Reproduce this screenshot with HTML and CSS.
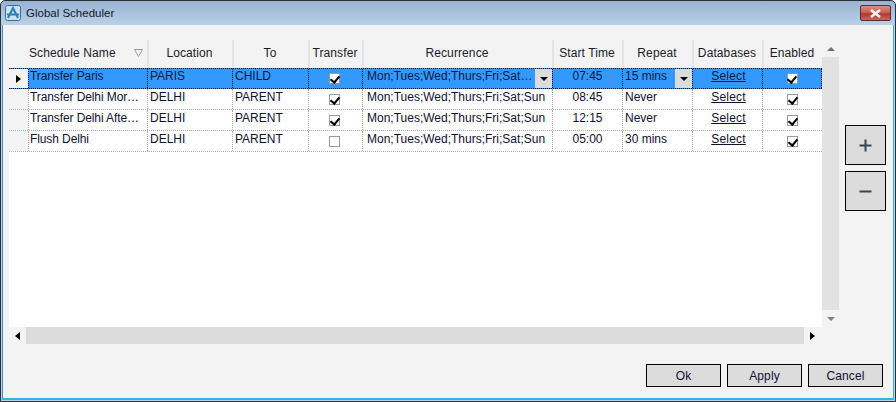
FILE: index.html
```html
<!DOCTYPE html>
<html lang="en">
<head>
<meta charset="utf-8">
<title>Global Scheduler</title>
<link rel="stylesheet" href="styles.css">
</head>
<body>
<div class="window">
  <div class="titlebar">
    <svg class="app-icon" width="16" height="16" viewBox="0 0 16 16"><rect x="0.5" y="0.5" width="15" height="15" rx="2" fill="#cfe0ef" stroke="#2f6f9f"/><path d="M3 13 L8 3 L13 13 M2 9.5 H14" fill="none" stroke="#2c7fb8" stroke-width="2"/></svg>
    <span class="title">Global Scheduler</span>
    <div class="close"><svg width="13" height="9" viewBox="0 0 13 9"><path d="M2 1 L11 8 M11 1 L2 8" stroke="#f4f0ee" stroke-width="2.6"/></svg></div>
  </div>
  <div class="client">
    <div class="main">
      <div class="grid-wrap">
        <div class="grid-top">
          <div class="grid">
            <div class="head-row">
              <div class="corner"></div>
              <div class="hcell c1 name-head"><span>Schedule Name</span><svg class="filter" width="9" height="8" viewBox="0 0 9 8"><path d="M0.5 0.5 H8.5 L4.5 7.5 Z" fill="#f3f3f3" stroke="#9a9a9a"/></svg></div>
              <div class="hcell c2">Location</div>
              <div class="hcell c3">To</div>
              <div class="hcell c4">Transfer</div>
              <div class="hcell c5">Recurrence</div>
              <div class="hcell c6">Start Time</div>
              <div class="hcell c7">Repeat</div>
              <div class="hcell c8">Databases</div>
              <div class="hcell c9">Enabled</div>
            </div>
            <div class="body">
              <div class="row selected">
                <div class="rowhead"><i class="pointer"></i></div>
                <div class="cell c1">Transfer Paris</div>
                <div class="cell c2">PARIS</div>
                <div class="cell c3">CHILD</div>
                <div class="cell c4 center"><span class="check on"></span></div>
                <div class="cell c5 combo"><span class="val">Mon;Tues;Wed;Thurs;Fri;Sat…</span><span class="drop"><i></i></span></div>
                <div class="cell c6 center">07:45</div>
                <div class="cell c7 combo"><span class="val">15 mins</span><span class="drop"><i></i></span></div>
                <div class="cell c8 center"><u>Select</u></div>
                <div class="cell c9 center"><span class="check on"></span></div>
              </div>
              <div class="row">
                <div class="rowhead"></div>
                <div class="cell c1">Transfer Delhi Mor…</div>
                <div class="cell c2">DELHI</div>
                <div class="cell c3">PARENT</div>
                <div class="cell c4 center"><span class="check on"></span></div>
                <div class="cell c5">Mon;Tues;Wed;Thurs;Fri;Sat;Sun</div>
                <div class="cell c6 center">08:45</div>
                <div class="cell c7">Never</div>
                <div class="cell c8 center"><u>Select</u></div>
                <div class="cell c9 center"><span class="check on"></span></div>
              </div>
              <div class="row">
                <div class="rowhead"></div>
                <div class="cell c1">Transfer Delhi Afte…</div>
                <div class="cell c2">DELHI</div>
                <div class="cell c3">PARENT</div>
                <div class="cell c4 center"><span class="check on"></span></div>
                <div class="cell c5">Mon;Tues;Wed;Thurs;Fri;Sat;Sun</div>
                <div class="cell c6 center">12:15</div>
                <div class="cell c7">Never</div>
                <div class="cell c8 center"><u>Select</u></div>
                <div class="cell c9 center"><span class="check on"></span></div>
              </div>
              <div class="row">
                <div class="rowhead"></div>
                <div class="cell c1">Flush Delhi</div>
                <div class="cell c2">DELHI</div>
                <div class="cell c3">PARENT</div>
                <div class="cell c4 center"><span class="check"></span></div>
                <div class="cell c5">Mon;Tues;Wed;Thurs;Fri;Sat;Sun</div>
                <div class="cell c6 center">05:00</div>
                <div class="cell c7">30 mins</div>
                <div class="cell c8 center"><u>Select</u></div>
                <div class="cell c9 center"><span class="check on"></span></div>
              </div>
            </div>
          </div>
          <div class="vscroll">
            <div class="arrow-box up"><i></i></div>
            <div class="vtrack"></div>
            <div class="arrow-box down"><i></i></div>
          </div>
        </div>
        <div class="hscroll">
          <div class="harrow left"><i></i></div>
          <div class="htrack"></div>
          <div class="harrow right"><i></i></div>
          <div class="scroll-corner"></div>
        </div>
      </div>
      <div class="side">
        <button class="side-btn"><svg width="13" height="13" viewBox="0 0 13 13"><path d="M6.5 0.5 V12.5 M0.5 6.5 H12.5" stroke="#37455c" stroke-width="2"/></svg></button>
        <button class="side-btn"><svg width="13" height="13" viewBox="0 0 13 13"><path d="M0.5 6.5 H12.5" stroke="#37455c" stroke-width="2"/></svg></button>
      </div>
    </div>
    <div class="footer">
      <button class="btn">Ok</button>
      <button class="btn">Apply</button>
      <button class="btn">Cancel</button>
    </div>
  </div>
</div>
</body>
</html>
```
FILE: styles.css
```css
* { box-sizing: border-box; }
html, body { margin: 0; padding: 0; }
body { width: 896px; height: 402px; overflow: hidden; background: #fff; font-family: "Liberation Sans", Arial, sans-serif; font-size: 12px; color: #101030; }
.window { width: 896px; height: 402px; display: flex; flex-direction: column; border: 1px solid #2b3038; border-radius: 5px 5px 0 0; background: linear-gradient(#97b2d1, #bcd2e9 25px); padding: 0 1px 1px; }
.titlebar { height: 24px; flex: none; display: flex; align-items: center; padding-left: 3px; padding-right: 3px; }
.app-icon { flex: none; }
.title { margin-left: 5px; font-size: 11.5px; color: #10182a; }
.close { margin-left: auto; align-self: flex-start; margin-top: 4px; width: 31px; height: 16px; border: 1px solid #5c2a36; border-radius: 2px; background: linear-gradient(#d98f86, #c45c50 50%, #b2362c 55%, #c9685c); display: flex; align-items: center; justify-content: center; }
.client { flex: 1; min-height: 0; display: flex; flex-direction: column; background: #f3f3f3; border-left: 1px solid #3f8fd0; border-right: 1px solid #29b6e8; border-bottom: 2px solid #29b6e8; }
.main { display: flex; padding-left: 6px; padding-top: 15px; }
.grid-wrap { width: 830px; flex: none; }
.grid-top { display: flex; height: 287px; }
.grid { width: 813px; flex: none; display: flex; flex-direction: column; }
.head-row { display: flex; height: 28px; flex: none; align-items: stretch; background: #f3f3f3; }
.corner { width: 19px; flex: none; }
.hcell { display: flex; align-items: center; justify-content: center; border-left: 2px solid #e4e4e4; padding-bottom: 3px; padding-right: 2px; color: #1a1a2c; letter-spacing: 0.1px; height: 28px; flex: none; }
.hcell.c1 { border-left: 0; }
.name-head { justify-content: flex-start; padding-left: 1px; padding-right: 0; }
.filter { margin-left: 18px; }
.c1 { width: 119px; }
.c2 { width: 85px; }
.c3 { width: 76px; }
.c4 { width: 54px; }
.c5 { width: 190px; }
.c6 { width: 70px; }
.c7 { width: 70px; }
.c8 { width: 70px; }
.c9 { width: 60px; }
.body { flex: 1; background: #fff; }
.row { display: flex; height: 21px; border-bottom: 1px dotted #a8a8a8; }
.row.selected { height: 21px; background: #3399ff; border-top: 1px dotted #000; border-bottom: 1px dotted #000; }
.rowhead { width: 19px; flex: none; background: #f3f3f3; display: flex; align-items: center; justify-content: center; }
.pointer { width: 0; height: 0; border-left: 5px solid #000; border-top: 4.5px solid transparent; border-bottom: 4.5px solid transparent; margin-top: 1px; }
.cell { flex: none; display: flex; align-items: center; padding: 0 2px 5px 2px; border-left: 1px dotted #a8a8a8; white-space: nowrap; overflow: hidden; }
.selected .cell { border-left: 1px dotted #000; color: #0a1a44; }
.center { justify-content: center; }
.selected .c9.cell { border-right: 1px dotted #000; }
.c1.cell { padding-left: 1px; letter-spacing: -0.1px; }
.c4.cell { padding: 0 2px 0 0; }
.c9.cell { padding: 0; }
.c5.cell { padding-left: 4px; }
.c8.cell { padding-left: 4px; letter-spacing: 0.2px; }
.check { width: 11px; height: 11px; border: 1px solid #9a9a9a; background: #fff; display: block; position: relative; }
.check.on::after { content: ""; position: absolute; left: 1.5px; top: 0; width: 4px; height: 7px; border: solid #000; border-width: 0 2px 2px 0; transform: rotate(40deg); }
.cell.combo { padding-right: 0; padding-bottom: 0; }
.combo .val { flex: 1; min-width: 0; padding-bottom: 5px; }
.drop { width: 17px; flex: none; align-self: stretch; background: #dcdcdc; display: flex; align-items: center; justify-content: center; }
.drop i { width: 0; height: 0; border-top: 4px solid #000; border-left: 4px solid transparent; border-right: 4px solid transparent; margin-top: 1px; }
u { text-decoration: underline; }
.vscroll { width: 17px; flex: none; display: flex; flex-direction: column; }
.arrow-box { height: 17px; flex: none; display: flex; align-items: center; justify-content: center; }
.vtrack { flex: 1; background: #e2e2e2; }
.arrow-box.up i { width: 0; height: 0; border-bottom: 4px solid #707070; border-left: 4px solid transparent; border-right: 4px solid transparent; }
.arrow-box.down i { width: 0; height: 0; border-top: 4px solid #808080; border-left: 4px solid transparent; border-right: 4px solid transparent; }
.hscroll { display: flex; height: 17px; }
.harrow { width: 17px; flex: none; display: flex; align-items: center; justify-content: center; }
.htrack { width: 778px; flex: none; background: #dcdcdc; }
.harrow.left i { width: 0; height: 0; border-right: 5px solid #000; border-top: 4.5px solid transparent; border-bottom: 4.5px solid transparent; }
.harrow.right i { width: 0; height: 0; border-left: 5px solid #000; border-top: 4.5px solid transparent; border-bottom: 4.5px solid transparent; }
.scroll-corner { width: 17px; height: 17px; }
.side { display: flex; flex-direction: column; gap: 6px; margin-left: 6px; padding-top: 85px; }
.side-btn { width: 41px; height: 40px; padding: 0; border: 1px solid #000; background: #dcdcdc; display: flex; align-items: center; justify-content: center; }
.footer { display: flex; justify-content: flex-end; gap: 6px; padding-top: 20px; padding-right: 10px; }
.btn { width: 75px; height: 23px; padding: 0; border: 1px solid #000; background: #dcdcdc; font: 12px "Liberation Sans", Arial, sans-serif; color: #101030; letter-spacing: 0.1px; }
```
